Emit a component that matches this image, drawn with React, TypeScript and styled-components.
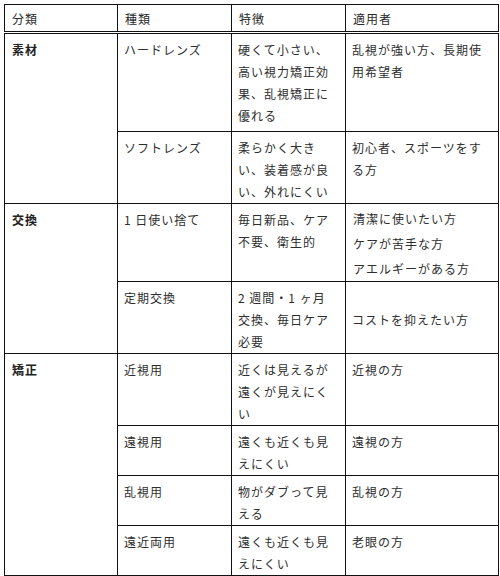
import React from 'react';
import styled, { createGlobalStyle } from 'styled-components';

const GlobalStyle = createGlobalStyle`
  body {
    margin: 0;
    background: #fff;
    font-family: "Noto Sans CJK JP", "Noto Sans", sans-serif;
  }
  * {
    box-sizing: border-box;
  }
`;

const Page = styled.div`
  padding: 4px 0 0 4px;
`;

const Table = styled.table`
  border-collapse: collapse;
  table-layout: fixed;
  width: 494px;
  font-size: 12px;
  letter-spacing: 1px;
  color: #2e2e2e;
`;

const Col = styled.col<{ $w: number }>`
  width: ${p => p.$w}px;
`;

const HeadCell = styled.th`
  height: 28px;
  padding: 0 6px 0 7px;
  text-align: left;
  font-weight: 400;
  color: #2a2a2a;
  border: 1px solid #111;
  border-bottom: 3px double #111;
  vertical-align: middle;
`;

const Row = styled.tr<{ $h: number }>`
  height: ${p => p.$h}px;
`;

const Cell = styled.td<{ $middle?: boolean; $loose?: boolean }>`
  padding: ${p => (p.$loose ? '2px 4px 0 7px' : '5px 4px 0 6px')};
  border: 1px solid #111;
  vertical-align: ${p => (p.$middle ? 'middle' : 'top')};
  line-height: ${p => (p.$loose ? '25px' : '22px')};
  white-space: nowrap;
  overflow: hidden;
`;

const GroupCell = styled(Cell)`
  padding-left: 7px;
  font-weight: 700;
  color: #222;
`;

type Item = {
  kind: string[];
  feat: string[];
  who: string[];
  whoMiddle?: boolean;
  whoLoose?: boolean;
  h: number;
};

type Group = { name: string; items: Item[] };

const groups: Group[] = [
  {
    name: '素材',
    items: [
      {
        kind: ['ハードレンズ'],
        feat: ['硬くて小さい、', '高い視力矯正効', '果、乱視矯正に', '優れる'],
        who: ['乱視が強い方、長期使', '用希望者'],
        h: 99,
      },
      {
        kind: ['ソフトレンズ'],
        feat: ['柔らかく大き', 'い、装着感が良', 'い、外れにくい'],
        who: ['初心者、スポーツをす', 'る方'],
        h: 71,
      },
    ],
  },
  {
    name: '交換',
    items: [
      {
        kind: ['1 日使い捨て'],
        feat: ['毎日新品、ケア', '不要、衛生的'],
        who: ['清潔に使いたい方', 'ケアが苦手な方', 'アエルギーがある方'],
        whoLoose: true,
        h: 77,
      },
      {
        kind: ['定期交換'],
        feat: ['2 週間・1 ヶ月', '交換、毎日ケア', '必要'],
        who: ['コストを抑えたい方'],
        whoMiddle: true,
        h: 72,
      },
    ],
  },
  {
    name: '矯正',
    items: [
      { kind: ['近視用'], feat: ['近くは見えるが', '遠くが見えにく', 'い'], who: ['近視の方'], h: 71 },
      { kind: ['遠視用'], feat: ['遠くも近くも見', 'えにくい'], who: ['遠視の方'], h: 50 },
      { kind: ['乱視用'], feat: ['物がダブって見', 'える'], who: ['乱視の方'], h: 50 },
      { kind: ['遠近両用'], feat: ['遠くも近くも見', 'えにくい'], who: ['老眼の方'], h: 50 },
    ],
  },
];

const Lines = ({ lines }: { lines: string[] }) => (
  <>
    {lines.map((l, i) => (
      <React.Fragment key={i}>
        {i > 0 && <br />}
        {l}
      </React.Fragment>
    ))}
  </>
);

export default function App() {
  return (
    <Page>
      <GlobalStyle />
      <Table>
        <colgroup>
          <Col $w={113} />
          <Col $w={114} />
          <Col $w={114} />
          <Col $w={153} />
        </colgroup>
        <thead>
          <tr>
            <HeadCell>分類</HeadCell>
            <HeadCell>種類</HeadCell>
            <HeadCell>特徴</HeadCell>
            <HeadCell>適用者</HeadCell>
          </tr>
        </thead>
        <tbody>
          {groups.map(g =>
            g.items.map((it, i) => (
              <Row key={g.name + i} $h={it.h}>
                {i === 0 && <GroupCell rowSpan={g.items.length}>{g.name}</GroupCell>}
                <Cell><Lines lines={it.kind} /></Cell>
                <Cell><Lines lines={it.feat} /></Cell>
                <Cell $middle={it.whoMiddle} $loose={it.whoLoose}>
                  <Lines lines={it.who} />
                </Cell>
              </Row>
            ))
          )}
          <Row $h={40}>
            <Cell />
            <Cell />
            <Cell />
            <Cell />
          </Row>
        </tbody>
      </Table>
    </Page>
  );
}
